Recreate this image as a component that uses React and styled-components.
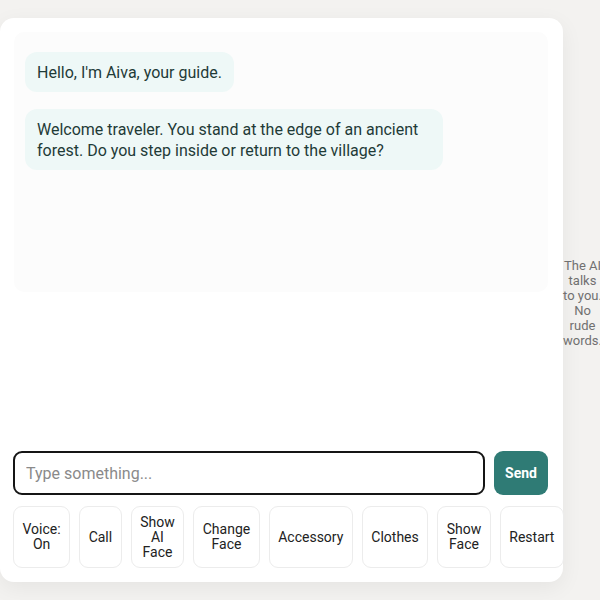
import React from "react";
import styled, { createGlobalStyle } from "styled-components";

const GlobalStyle = createGlobalStyle`
  html, body {
    margin: 0;
    padding: 0;
    background: #f3f2f0;
    font-family: Roboto, "Liberation Sans", sans-serif;
    overflow: hidden;
  }
`;

const messages = [
  "Hello, I'm Aiva, your guide.",
  "Welcome traveler. You stand at the edge of an ancient forest. Do you step inside or return to the village?",
];

const actions = [
  "Voice: On",
  "Call",
  "Show AI Face",
  "Change Face",
  "Accessory",
  "Clothes",
  "Show Face",
  "Restart",
];

export default function App() {
  return (
    <>
      <GlobalStyle />
      <Page>
        <Card>
          <Chat>
            {messages.map((m, i) => (
              <Bubble key={i}>{m}</Bubble>
            ))}
          </Chat>
          <Composer>
            <Input placeholder="Type something..." />
            <SendButton>Send</SendButton>
          </Composer>
          <Actions>
            {actions.map((a) => (
              <ActionButton key={a}>{a}</ActionButton>
            ))}
          </Actions>
        </Card>
        <Aside>The AI talks to you. No rude words.</Aside>
      </Page>
    </>
  );
}

const Page = styled.div`
  display: flex;
  align-items: center;
  box-sizing: border-box;
  padding-top: 18px;
  width: 600px;
  height: 600px;
`;

const Card = styled.div`
  flex: 0 0 563px;
  width: 563px;
  min-width: 0;
  align-self: flex-start;
  height: 564px;
  box-sizing: border-box;
  padding: 14px 15px 14px 13px;
  background: #fff;
  border-radius: 14px;
  box-shadow: 0 6px 22px rgba(0, 0, 0, 0.06);
  display: flex;
  flex-direction: column;
`;

const Chat = styled.div`
  height: 260px;
  flex-shrink: 0;
  margin-left: 1px;
  padding: 20px 11px;
  box-sizing: border-box;
  background: #fcfcfc;
  border-radius: 10px;
  display: flex;
  flex-direction: column;
  align-items: flex-start;
  gap: 17px;
`;

const Bubble = styled.div`
  max-width: 394px;
  padding: 9.5px 12px;
  background: #eef8f7;
  color: #1f3b37;
  font-size: 16px;
  line-height: 21px;
  border-radius: 12px;
  width: fit-content;
`;

const Composer = styled.div`
  margin-top: auto;
  display: flex;
  gap: 9px;
`;

const Input = styled.input`
  flex: 1;
  min-width: 0;
  height: 44px;
  box-sizing: border-box;
  border: 2px solid #151515;
  border-radius: 9px;
  padding: 0 11px;
  font-family: inherit;
  font-size: 16px;
  color: #222;
  background: #fff;
  outline: none;

  &::placeholder {
    color: #8a8a8a;
  }
`;

const SendButton = styled.button`
  flex: 0 0 54px;
  height: 44px;
  border: none;
  border-radius: 9px;
  background: #2f7b75;
  color: #fff;
  font-family: inherit;
  font-size: 14px;
  font-weight: 700;
`;

const Actions = styled.div`
  margin-top: 11px;
  display: flex;
  gap: 9px;
  height: 62px;
  flex-shrink: 0;
`;

const ActionButton = styled.button`
  flex: 0 1 auto;
  min-width: min-content;
  box-sizing: border-box;
  padding: 6px 8.5px;
  border: 1px solid #ececec;
  border-radius: 9px;
  background: #fff;
  color: #222;
  font-family: inherit;
  font-size: 14px;
  line-height: 15px;
  text-align: center;
`;

const Aside = styled.div`
  flex: 0 0 39px;
  width: 39px;
  margin-top: -12px;
  font-size: 13px;
  line-height: 15px;
  color: #707070;
  text-align: center;
`;
